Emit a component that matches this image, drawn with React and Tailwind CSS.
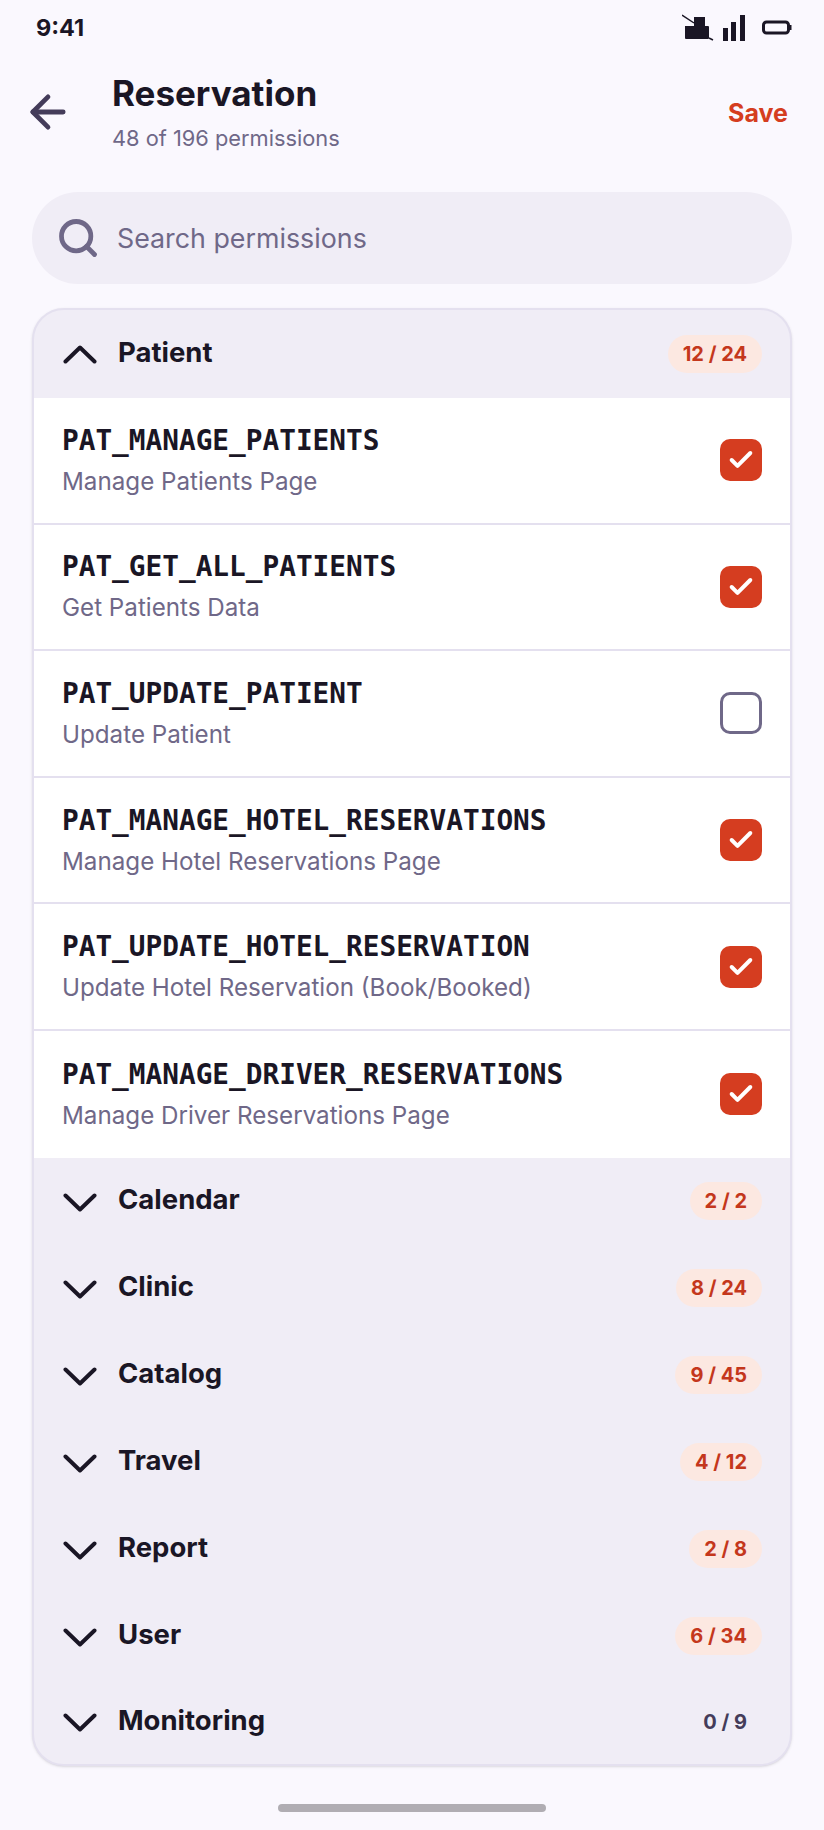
import { ArrowLeft, Search, Check } from "lucide-react";

const ROWS = [
  { code: "PAT_MANAGE_PATIENTS", label: "Manage Patients Page", on: true },
  { code: "PAT_GET_ALL_PATIENTS", label: "Get Patients Data", on: true },
  { code: "PAT_UPDATE_PATIENT", label: "Update Patient", on: false },
  { code: "PAT_MANAGE_HOTEL_RESERVATIONS", label: "Manage Hotel Reservations Page", on: true },
  { code: "PAT_UPDATE_HOTEL_RESERVATION", label: "Update Hotel Reservation (Book/Booked)", on: true },
  { code: "PAT_MANAGE_DRIVER_RESERVATIONS", label: "Manage Driver Reservations Page", on: true },
];

const GROUPS = [
  { name: "Calendar", count: "2 / 2" },
  { name: "Clinic", count: "8 / 24" },
  { name: "Catalog", count: "9 / 45" },
  { name: "Travel", count: "4 / 12" },
  { name: "Report", count: "2 / 8" },
  { name: "User", count: "6 / 34" },
  { name: "Monitoring", count: "0 / 9", none: true },
];

function Count({ value, none }) {
  if (none) return <span className="px-[15px] text-[20px] font-bold leading-[38px] text-[#443c5a]">{value}</span>;
  return <span className="rounded-full bg-[#fce8e1] px-[15px] text-[20px] font-bold leading-[38px] text-[#c4371c]">{value}</span>;
}

function Chevron({ open }) {
  return (
    <svg width="34" height="20" viewBox="0 0 34 20" fill="none" className={open ? "mt-[-1px] text-[#1a1625]" : "mt-[3px] text-[#1a1625]"}>
      <path
        d={open ? "M2.5 17.5L17 3.5L31.5 17.5" : "M2.5 2.5L17 16.5L31.5 2.5"}
        stroke="currentColor"
        strokeWidth="4"
        strokeLinecap="round"
        strokeLinejoin="round"
      />
    </svg>
  );
}

function GroupHeader({ name, count, none, open, className = "h-[87px]" }) {
  return (
    <div className={`flex items-center pl-[29px] pr-[28px] ${className}`}>
      <Chevron open={open} />
      <span className="ml-[21px] mt-[-2px] flex-1 text-[27.5px] font-bold text-[#1a1625]">{name}</span>
      <Count value={count} none={none} />
    </div>
  );
}

function Row({ code, label, on, last }) {
  return (
    <div className={`flex h-[126.6px] items-center bg-white pl-[28px] pr-[28px] ${last ? "" : "border-b-2 border-[#e4e0ef]"}`}>
      <div className="min-w-0 flex-1">
        <div className="mt-[-1px] font-['DejaVu_Sans_Mono',monospace] text-[27.75px] font-bold leading-[38px] text-[#1a1625]">{code}</div>
        <div className="mt-[6px] text-[24.2px] leading-[32px] text-[#6f6888]">{label}</div>
      </div>
      {on ? (
        <span className="flex h-[42px] w-[42px] items-center justify-center rounded-[10px] bg-[#d53d20]">
          <Check className="h-[28px] w-[28px] text-white" strokeWidth={3.4} />
        </span>
      ) : (
        <span className="h-[42px] w-[42px] rounded-[10px] border-[3px] border-[#6f6888]" />
      )}
    </div>
  );
}

export default function App() {
  return (
    <div className="flex h-[1830px] w-[824px] flex-col bg-[#faf8fe] font-['Inter',sans-serif]">
      {/* status bar */}
      <div className="flex h-[56px] items-center justify-between pl-[36px] pr-[32px]">
        <span className="text-[23.5px] font-bold text-[#1a1625]">9:41</span>
        <div className="flex items-center">
          <svg width="32" height="28" viewBox="0 0 32 28" className="text-[#1a1625]">
            <path d="M3 12h9V3h11v9h3a1 1 0 0 1 1 1v11a1 1 0 0 1-1 1H4a1 1 0 0 1-1-1z" fill="currentColor" />
            <path d="M0 1l12 8M27 24l4 2" stroke="currentColor" strokeWidth="1.5" />
          </svg>
          <svg width="24" height="28" viewBox="0 0 24 28" className="ml-[8px] text-[#1a1625]">
            <rect x="1" y="14" width="5" height="13" fill="currentColor" />
            <rect x="9" y="8" width="5" height="19" fill="currentColor" />
            <rect x="18" y="1" width="5" height="26" fill="currentColor" />
          </svg>
          <svg width="30" height="16" viewBox="0 0 30 16" className="ml-[16px] text-[#1a1625]">
            <rect x="1.5" y="2" width="25" height="11" rx="3" fill="none" stroke="currentColor" strokeWidth="3" />
            <rect x="27" y="5" width="2.5" height="5" fill="currentColor" />
          </svg>
        </div>
      </div>

      {/* header */}
      <div className="flex h-[136px] items-start pl-[22px] pr-[36px]">
        <ArrowLeft className="mt-[30px] h-[52px] w-[52px] text-[#443c5a]" strokeWidth={2.2} />
        <div className="ml-[38px] flex-1">
          <div className="mt-[14px] text-[35px] font-bold leading-[46px] text-[#1a1625]">Reservation</div>
          <div className="mt-[7px] text-[21.8px] leading-[30px] text-[#6f6888]">48 of 196 permissions</div>
        </div>
        <span className="mt-[39px] text-[25px] font-bold leading-[36px] text-[#d53d20]">Save</span>
      </div>

      {/* search */}
      <div className="mx-[32px] flex h-[92px] items-center rounded-full bg-[#f0edf6] pl-[24px]">
        <Search className="h-[44px] w-[44px] text-[#6f6888]" strokeWidth={2.6} />
        <span className="ml-[17px] mt-[1px] text-[26.8px] text-[#6f6888]">Search permissions</span>
      </div>

      {/* permission groups */}
      <div className="mx-[32px] mt-[24px] overflow-hidden rounded-[32px] border-2 border-[#e4e0ef] bg-[#f0edf6] shadow-sm">
        <GroupHeader name="Patient" count="12 / 24" open className="h-[88px]" />
        {ROWS.map((r, i) => (
          <Row key={r.code} {...r} last={i === ROWS.length - 1} />
        ))}
        {GROUPS.map((g, i) => (
          <GroupHeader key={g.name} {...g} className={i === GROUPS.length - 1 ? "h-[84px]" : "h-[87px]"} />
        ))}
      </div>

      {/* home indicator */}
      <div className="mt-[38px] flex justify-center">
        <div className="h-[8px] w-[268px] rounded-full bg-[#b0adb3]" />
      </div>
    </div>
  );
}
